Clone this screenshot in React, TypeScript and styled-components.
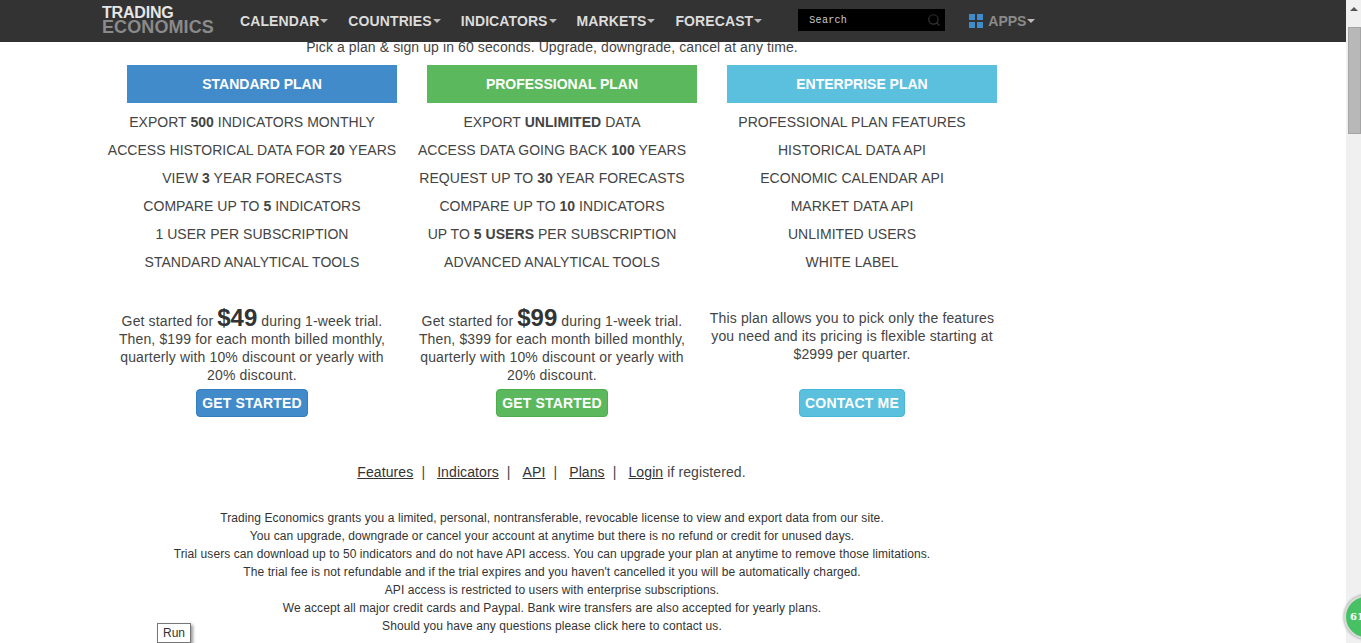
import React from "react";
import styled, { createGlobalStyle } from "styled-components";
import { Search } from "lucide-react";

const GlobalStyle = createGlobalStyle`
  html, body {
    margin: 0;
    padding: 0;
    height: 643px;
    overflow: hidden;
    background: #fff;
    font-family: "Liberation Sans", Arial, sans-serif;
    color: #333;
  }
`;

const plans = [
  {
    title: "STANDARD PLAN",
    color: "#428bca",
    border: "#357ebd",
    features: [
      <>EXPORT <b>500</b> INDICATORS MONTHLY</>,
      <>ACCESS HISTORICAL DATA FOR <b>20</b> YEARS</>,
      <>VIEW <b>3</b> YEAR FORECASTS</>,
      <>COMPARE UP TO <b>5</b> INDICATORS</>,
      <>1 USER PER SUBSCRIPTION</>,
      <>STANDARD ANALYTICAL TOOLS</>,
    ],
    price: "$49",
    monthly: "$199",
    button: "GET STARTED",
  },
  {
    title: "PROFESSIONAL PLAN",
    color: "#5cb85c",
    border: "#4cae4c",
    features: [
      <>EXPORT <b>UNLIMITED</b> DATA</>,
      <>ACCESS DATA GOING BACK <b>100</b> YEARS</>,
      <>REQUEST UP TO <b>30</b> YEAR FORECASTS</>,
      <>COMPARE UP TO <b>10</b> INDICATORS</>,
      <>UP TO <b>5 USERS</b> PER SUBSCRIPTION</>,
      <>ADVANCED ANALYTICAL TOOLS</>,
    ],
    price: "$99",
    monthly: "$399",
    button: "GET STARTED",
  },
  {
    title: "ENTERPRISE PLAN",
    color: "#5bc0de",
    border: "#46b8da",
    features: [
      <>PROFESSIONAL PLAN FEATURES</>,
      <>HISTORICAL DATA API</>,
      <>ECONOMIC CALENDAR API</>,
      <>MARKET DATA API</>,
      <>UNLIMITED USERS</>,
      <>WHITE LABEL</>,
    ],
    button: "CONTACT ME",
  },
];

const notes = [
  "Trading Economics grants you a limited, personal, nontransferable, revocable license to view and export data from our site.",
  "You can upgrade, downgrade or cancel your account at anytime but there is no refund or credit for unused days.",
  "Trial users can download up to 50 indicators and do not have API access. You can upgrade your plan at anytime to remove those limitations.",
  "The trial fee is not refundable and if the trial expires and you haven't cancelled it you will be automatically charged.",
  "API access is restricted to users with enterprise subscriptions.",
  "We accept all major credit cards and Paypal. Bank wire transfers are also accepted for yearly plans.",
  "Should you have any questions please click here to contact us.",
];

const navItems = ["CALENDAR", "COUNTRIES", "INDICATORS", "MARKETS", "FORECAST"];
const links = ["Features", "Indicators", "API", "Plans"];

const App = () => {
  return (
    <Page>
      <GlobalStyle />
      <Main>
        <Header>
          <Logo>
            <span className="top">TRADING</span>
            <span className="bottom">ECONOMICS</span>
          </Logo>
          <Nav>
            {navItems.map((item) => (
              <NavItem key={item}>
                {item}
                <Caret />
              </NavItem>
            ))}
          </Nav>
          <SearchBox>
            Search
            <Search size={14} color="#333" strokeWidth={2} />
          </SearchBox>
          <Apps>
            <AppsIcon>
              <i />
              <i />
              <i />
              <i />
            </AppsIcon>
            APPS
            <Caret />
          </Apps>
        </Header>

        <Intro>Pick a plan &amp; sign up in 60 seconds. Upgrade, downgrade, cancel at any time.</Intro>

        <Plans>
          {plans.map((plan) => (
            <PlanCol key={plan.title}>
              <PlanTitle $color={plan.color}>{plan.title}</PlanTitle>
              <Features>
                {plan.features.map((feature, i) => (
                  <Feature key={i}>{feature}</Feature>
                ))}
              </Features>
              {plan.price ? (
                <PriceText>
                  Get started for <Price>{plan.price}</Price> during 1-week trial.
                  <br />
                  Then, {plan.monthly} for each month billed monthly,
                  <br />
                  quarterly with 10% discount or yearly with
                  <br />
                  20% discount.
                </PriceText>
              ) : (
                <PriceText>
                  This plan allows you to pick only the features
                  <br />
                  you need and its pricing is flexible starting at
                  <br />
                  $2999 per quarter.
                </PriceText>
              )}
              <PlanButton $color={plan.color} $border={plan.border}>
                {plan.button}
              </PlanButton>
            </PlanCol>
          ))}
        </Plans>

        <LinkRow>
          {links.map((link) => (
            <React.Fragment key={link}>
              <a>{link}</a>
              <Sep>|</Sep>
            </React.Fragment>
          ))}
          <a>Login</a> if registered.
        </LinkRow>

        <Notes>
          {notes.map((note) => (
            <div key={note}>{note}</div>
          ))}
        </Notes>

        <RunTag>Run</RunTag>
      </Main>

      <Scrollbar>
        <ScrollArrow />
        <ScrollThumb />
      </Scrollbar>

      <Badge>61</Badge>
    </Page>
  );
};

export default App;

const Page = styled.div`
  position: relative;
  display: flex;
  width: 1361px;
  height: 643px;
  overflow: hidden;
`;

const Main = styled.div`
  position: relative;
  width: 1346px;
  height: 643px;
  overflow: hidden;
`;

const Header = styled.div`
  display: flex;
  align-items: center;
  height: 42px;
  padding-left: 102px;
  background-color: #333;
  box-sizing: border-box;
`;

const Logo = styled.div`
  display: flex;
  flex-direction: column;
  width: 138px;
  margin-top: -3px;
  font-weight: 700;
  line-height: 14px;
  .top {
    font-size: 16px;
    letter-spacing: -0.2px;
    color: #e6e6e6;
  }
  .bottom {
    font-size: 18px;
    letter-spacing: 0.1px;
    color: #8a8a8a;
  }
`;

const Nav = styled.div`
  display: flex;
  gap: 20px;
`;

const NavItem = styled.div`
  display: flex;
  align-items: center;
  font-size: 14px;
  font-weight: 700;
  letter-spacing: 0.1px;
  color: #dcdcdc;
`;

const Caret = styled.span`
  width: 0;
  height: 0;
  margin-left: 1px;
  border-top: 4px solid #bbb;
  border-left: 4px solid transparent;
  border-right: 4px solid transparent;
`;

const SearchBox = styled.div`
  display: flex;
  align-items: center;
  justify-content: space-between;
  box-sizing: border-box;
  width: 147px;
  height: 22px;
  margin-left: 36px;
  margin-top: -2px;
  padding: 0 4px 0 11px;
  background-color: #000;
  font-family: "Liberation Mono", monospace;
  font-size: 10px;
  letter-spacing: 0.3px;
  color: #ccc;
`;

const Apps = styled.div`
  display: flex;
  align-items: center;
  margin-left: 24px;
  font-size: 14px;
  font-weight: 700;
  color: #8a8a8a;
`;

const AppsIcon = styled.span`
  display: grid;
  grid-template-columns: 6px 6px;
  grid-template-rows: 6px 6px;
  gap: 2px;
  margin-right: 5px;
  i {
    display: block;
    background-color: #428bca;
  }
`;

const Intro = styled.div`
  margin-top: -3px;
  margin-left: 2px;
  width: 1100px;
  text-align: center;
  font-size: 14px;
  line-height: 16px;
  letter-spacing: 0.1px;
  color: #444;
`;

const Plans = styled.div`
  display: flex;
  width: 900px;
  margin-top: 10px;
  margin-left: 102px;
`;

const PlanCol = styled.div`
  display: flex;
  flex-direction: column;
  align-items: center;
  width: 300px;
`;

const PlanTitle = styled.div<{ $color: string }>`
  box-sizing: border-box;
  width: 270px;
  height: 38px;
  margin-left: 20px;
  line-height: 38px;
  text-align: center;
  font-size: 14px;
  font-weight: 700;
  color: #fff;
  background-color: ${(p) => p.$color};
`;

const Features = styled.div`
  display: flex;
  flex-direction: column;
  align-items: center;
  margin-top: 5px;
  height: 197px;
`;

const Feature = styled.div`
  height: 28px;
  line-height: 28px;
  font-size: 14px;
  letter-spacing: 0.04px;
  white-space: nowrap;
  color: #444;
`;

const PriceText = styled.div`
  height: 78px;
  margin-top: 4px;
  text-align: center;
  font-size: 14px;
  line-height: 18px;
  letter-spacing: 0.14px;
  white-space: nowrap;
  color: #444;
`;

const Price = styled.b`
  font-size: 24px;
  line-height: 18px;
  letter-spacing: 0;
  color: #333;
`;

const PlanButton = styled.div<{ $color: string; $border: string }>`
  box-sizing: border-box;
  height: 28px;
  margin-top: 2px;
  padding: 0 5px;
  line-height: 26px;
  font-size: 14px;
  font-weight: 700;
  letter-spacing: 0.15px;
  color: #fff;
  border: 1px solid ${(p) => p.$border};
  border-radius: 4px;
  background-color: ${(p) => p.$color};
`;

const LinkRow = styled.div`
  width: 1103px;
  margin-top: 46px;
  text-align: center;
  font-size: 14px;
  line-height: 18px;
  letter-spacing: 0.1px;
  color: #444;
  a {
    color: #333;
    text-decoration: underline;
  }
`;

const Sep = styled.span`
  margin: 0 12px 0 8px;
`;

const Notes = styled.div`
  width: 1100px;
  margin-top: 28px;
  margin-left: 2px;
  text-align: center;
  font-size: 12px;
  line-height: 18px;
  letter-spacing: 0.09px;
  color: #333;
`;

const RunTag = styled.div`
  position: absolute;
  left: 157px;
  top: 623px;
  box-sizing: border-box;
  width: 34px;
  height: 20px;
  line-height: 18px;
  text-align: center;
  font-size: 12px;
  color: #333;
  background: #fff;
  border: 1px solid #777;
  box-shadow: 2px 2px 3px #999;
`;

const Scrollbar = styled.div`
  display: flex;
  flex-direction: column;
  align-items: center;
  width: 15px;
  height: 643px;
  background-color: #f0f0f0;
`;

const ScrollArrow = styled.div`
  height: 27px;
  width: 15px;
  display: flex;
  justify-content: center;
  padding-top: 7px;
  box-sizing: border-box;
  &::before {
    content: "";
    width: 0;
    height: 0;
    border-bottom: 4px solid #555;
    border-left: 4px solid transparent;
    border-right: 4px solid transparent;
  }
`;

const ScrollThumb = styled.div`
  box-sizing: border-box;
  width: 13px;
  height: 107px;
  margin-left: 1px;
  background-color: #b8b8b8;
  border: 1px solid #a4a4a4;
`;

const Badge = styled.div`
  position: absolute;
  left: 1344px;
  top: 595px;
  box-sizing: border-box;
  width: 44px;
  height: 44px;
  padding-left: 4px;
  line-height: 40px;
  border-radius: 50%;
  border: 2px solid #d8dcd8;
  background-color: #47c163;
  box-shadow: 0 0 3px #888;
  font-family: "DejaVu Serif", serif;
  font-size: 10px;
  font-weight: 700;
  color: #fff;
`;
